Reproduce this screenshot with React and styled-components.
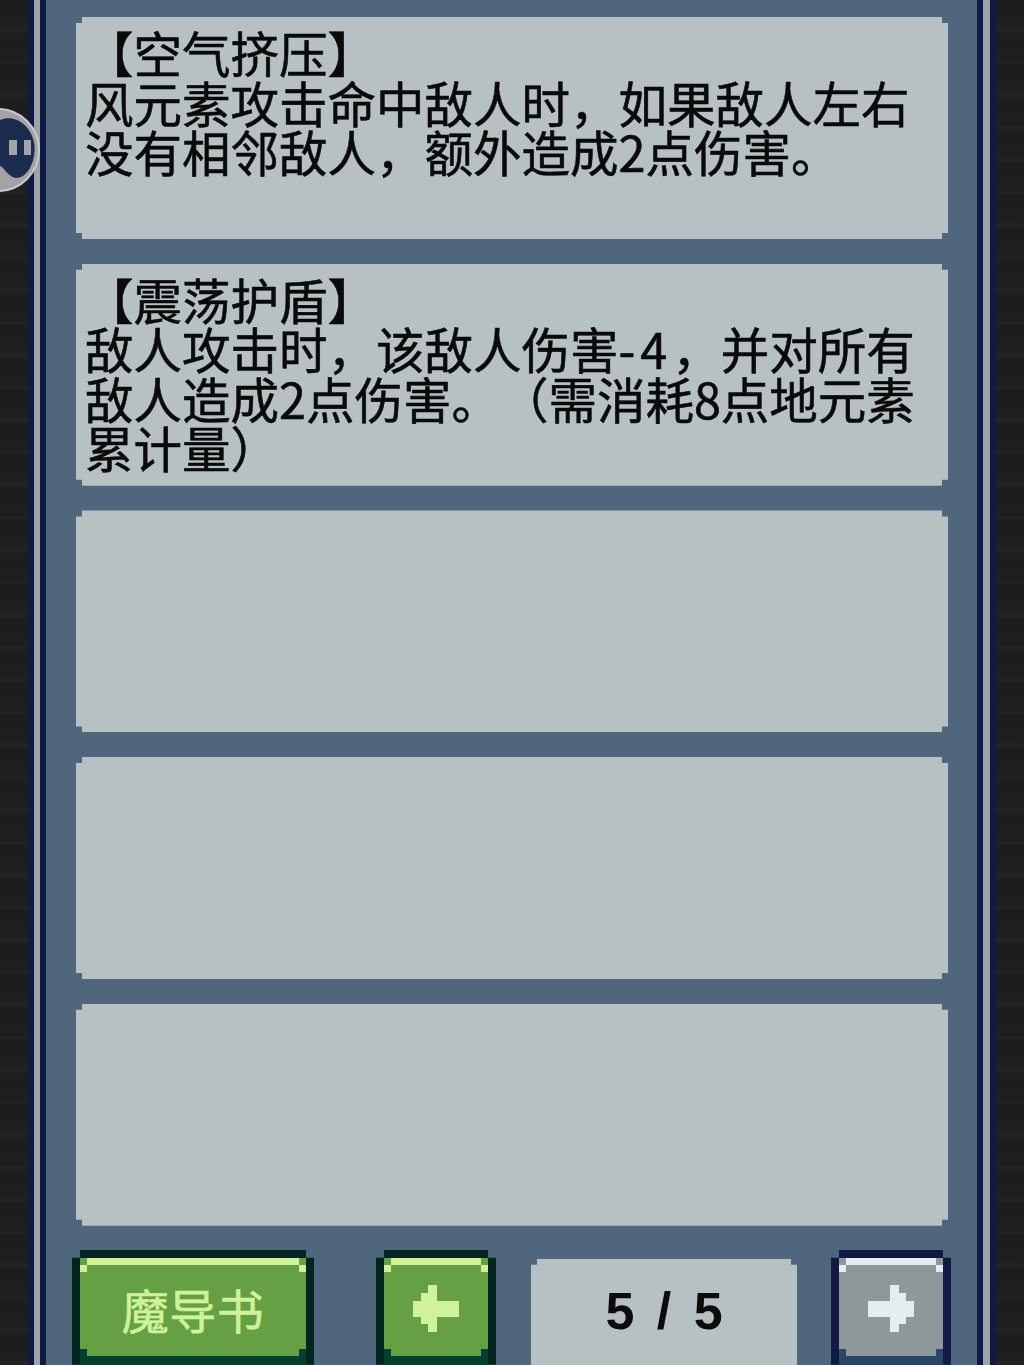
import React from 'react';
import styled, { createGlobalStyle } from 'styled-components';

const GlobalStyle = createGlobalStyle`
  html, body {
    margin: 0;
    padding: 0;
    height: 1365px;
    overflow: hidden;
    background: #1f1f1f;
  }
`;

const notch = (n) => `polygon(
  ${n}px 0, calc(100% - ${n}px) 0, calc(100% - ${n}px) ${n}px, 100% ${n}px,
  100% calc(100% - ${n}px), calc(100% - ${n}px) calc(100% - ${n}px), calc(100% - ${n}px) 100%,
  ${n}px 100%, ${n}px calc(100% - ${n}px), 0 calc(100% - ${n}px), 0 ${n}px, ${n}px ${n}px
)`;

const palette = {
  green: { fill: '#66a044', light: '#cff29b', edge: '#04241f', low: '#04402f', text: '#cff29b' },
  grey: { fill: '#8f9899', light: '#e6edf0', edge: '#101a44', low: '#2a4565', text: '#e6edf0' },
};

const S = {
  Page: styled.div`
    width: 1024px;
    height: 1365px;
    overflow: hidden;
    box-sizing: border-box;
    position: relative;
    padding-left: 28px;
    background-color: #1e1e1e;
    background-image: repeating-linear-gradient(
      180deg,
      #1d1d1d 0,
      #1e1e1e 26px,
      #252525 30px,
      #1d1d1d 34px,
      #1e1e1e 60px,
      #252525 63px,
      #1d1d1d 65px
    );
  `,
  OuterRail: styled.div`
    width: 968px;
    height: 100%;
    box-sizing: border-box;
    border-left: 6px solid #0f1a45;
    border-right: 6px solid #0f1a45;
  `,
  MiddleRail: styled.div`
    height: 100%;
    box-sizing: border-box;
    border-left: 6px solid #9ea2ab;
    border-right: 7px solid #9ea2ab;
  `,
  Panel: styled.div`
    height: 100%;
    box-sizing: border-box;
    border-left: 6px solid #0f1a45;
    border-right: 6px solid #0f1a45;
    background: #4f667c;
    padding: 17px 29px 0 30px;
    display: flex;
    flex-direction: column;
  `,
  CardList: styled.div`
    display: flex;
    flex-direction: column;
    gap: 24.7px;
  `,
  Card: styled.div`
    height: 222px;
    box-sizing: border-box;
    padding: 11px 9px 0;
    background: #b7c1c4;
    clip-path: ${notch(6)};
    font-family: "Noto Sans CJK SC", "Liberation Sans", sans-serif;
    font-size: 48.5px;
    line-height: 49.5px;
    color: #0a0a0a;
    -webkit-text-stroke: 0.6px #0a0a0a;
    text-spacing-trim: space-all;
  `,
  WideGlyphs: styled.span`
    letter-spacing: 5px;
  `,
  Footer: styled.div`
    display: flex;
    align-items: flex-start;
    margin-top: 24px;
    margin-left: -4px;
  `,
  PixelButton: styled.div`
    flex: none;
    width: ${(p) => p.$width}px;
    height: 115px;
    box-sizing: border-box;
    padding: 0 8px;
    background: ${(p) => p.$tone.edge};
    clip-path: polygon(
      8px 0, calc(100% - 8px) 0, calc(100% - 8px) 8px, 100% 8px,
      100% 100%, 0 100%, 0 8px, 8px 8px
    );
    margin-right: ${(p) => p.$gap || 0}px;
  `,
  ButtonFace: styled.div`
    position: relative;
    margin-top: 8px;
    height: 98px;
    box-sizing: border-box;
    display: flex;
    align-items: center;
    justify-content: center;
    padding-top: 4px;
    background: ${(p) => p.$tone.fill};
    color: ${(p) => p.$tone.text};
    font-family: "Noto Sans CJK SC", "Liberation Sans", sans-serif;
    font-size: 47px;
    letter-spacing: 0.5px;
    -webkit-text-stroke: 0.6px ${(p) => p.$tone.text};
  `,
  TopShine: styled.span`
    position: absolute;
    top: 0;
    left: 7px;
    right: 7px;
    height: 7px;
    background: ${(p) => p.$tone.light};
  `,
  CornerDot: styled.span`
    position: absolute;
    width: 7px;
    height: 7px;
    ${(p) => (p.$right ? 'right: 0;' : 'left: 0;')}
    ${(p) => (p.$bottom ? 'bottom: 0;' : 'top: 7px;')}
    background: ${(p) => (p.$bottom ? p.$tone.low : p.$tone.light)};
  `,
  ButtonBase: styled.div`
    height: 9px;
    background: ${(p) => p.$tone.low};
  `,
  PageBox: styled.div`
    flex: none;
    width: 266px;
    height: 115px;
    margin-top: 9px;
    margin-right: 34px;
    padding: 0 0 11px 4px;
    box-sizing: border-box;
    display: flex;
    align-items: center;
    justify-content: center;
    background: #b7c1c4;
    clip-path: ${notch(6)};
    font-family: "Liberation Sans", Arial, sans-serif;
    font-weight: 700;
    font-size: 52px;
    letter-spacing: 4px;
    color: #0c0c0c;
  `,
  PauseBadge: styled.svg`
    position: absolute;
    left: 0;
    top: 100px;
  `,
};

// pixel arrow, drawn pointing left and flipped for "next"
const Arrow = ({ color, flip }) => (
  <svg width="46" height="47" viewBox="0 0 46 47" style={flip ? { transform: 'scaleX(-1)' } : undefined}>
    <path fill={color} d="M0 16h8V8h7V0h9v16h22v16H24v15h-9v-8H8v-7H0z" />
  </svg>
);

const PixelBtn = ({ tone, width, gap, children }) => (
  <S.PixelButton $tone={tone} $width={width} $gap={gap}>
    <S.ButtonFace $tone={tone}>
      <S.TopShine $tone={tone} />
      <S.CornerDot $tone={tone} />
      <S.CornerDot $tone={tone} $right />
      <S.CornerDot $tone={tone} $bottom />
      <S.CornerDot $tone={tone} $bottom $right />
      {children}
    </S.ButtonFace>
    <S.ButtonBase $tone={tone} />
  </S.PixelButton>
);

export default function App() {
  return (
    <S.Page>
      <GlobalStyle />
      <S.OuterRail>
        <S.MiddleRail>
          <S.Panel>
            <S.CardList>
              <S.Card>
                【空气挤压】<br />
                风元素攻击命中敌人时，如果敌人左右没有相邻敌人，额外造成2点伤害。
              </S.Card>
              <S.Card>
                【震荡护盾】<br />
                敌人攻击时，该敌人伤害<S.WideGlyphs>-4</S.WideGlyphs>，并对所有敌人造成2点伤害。（需消耗8点地元素累计量）
              </S.Card>
              <S.Card />
              <S.Card />
              <S.Card />
            </S.CardList>
            <S.Footer>
              <PixelBtn tone={palette.green} width={242} gap={62}>魔导书</PixelBtn>
              <PixelBtn tone={palette.green} width={120} gap={35}>
                <Arrow color={palette.green.text} />
              </PixelBtn>
              <S.PageBox>5 / 5</S.PageBox>
              <PixelBtn tone={palette.grey} width={120}>
                <Arrow color={palette.grey.text} flip />
              </PixelBtn>
            </S.Footer>
          </S.Panel>
        </S.MiddleRail>
      </S.OuterRail>
      <S.PauseBadge width="44" height="100" viewBox="0 100 44 100">
        <circle cx="-2" cy="150" r="41" fill="#a3a3a3" stroke="#c6cad4" strokeWidth="2" />
        <path fill="#1c2c4e" d="M0 120C14 114 30 124 34 142C37 160 28 178 16 178C8 177 5 168 0 166Z" />
        <rect x="9" y="140" width="8" height="15" fill="#a3a6a8" />
        <rect x="24" y="140" width="7" height="15" fill="#a3a6a8" />
      </S.PauseBadge>
    </S.Page>
  );
}
